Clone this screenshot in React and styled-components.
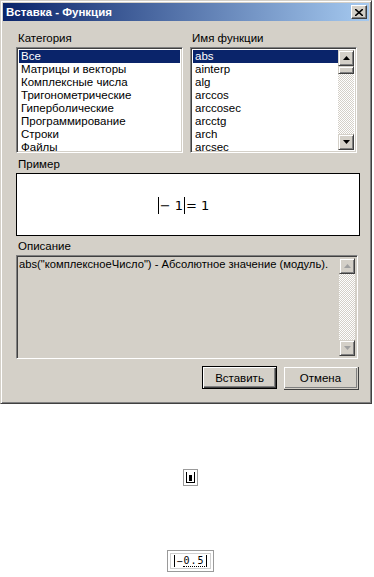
import React from 'react';
import styled, { createGlobalStyle } from 'styled-components';

const GlobalStyle = createGlobalStyle`
  html, body {
    margin: 0;
    padding: 0;
    background: #ffffff;
  }
  body {
    font-family: "Liberation Sans", Arial, sans-serif;
    font-size: 11px;
    color: #000;
  }
`;

const Page = styled.div`
  width: 374px;
  height: 577px;
  background: #fff;
  overflow: hidden;
`;

const Dialog = styled.div`
  width: 372px;
  height: 404px;
  box-sizing: border-box;
  background: #d4d0c8;
  border-top: 1px solid #d4d0c8;
  border-left: 1px solid #d4d0c8;
  border-right: 1px solid #404040;
  border-bottom: 1px solid #404040;
  box-shadow: inset 1px 1px 0 #ffffff, inset -1px -1px 0 #808080;
  padding: 2px;
  display: flex;
  flex-direction: column;
`;

const TitleBar = styled.div`
  height: 18px;
  display: flex;
  align-items: center;
  justify-content: space-between;
  padding: 0 2px 0 3px;
  background: linear-gradient(to right, #0a246a, #a6caf0);
  color: #fff;
  font-weight: bold;
  font-size: 11.5px;
`;

const CloseButton = styled.div`
  width: 16px;
  height: 14px;
  box-sizing: border-box;
  background: #d4d0c8;
  border-top: 1px solid #fff;
  border-left: 1px solid #fff;
  border-right: 1px solid #404040;
  border-bottom: 1px solid #404040;
  box-shadow: inset -1px -1px 0 #808080;
  display: flex;
  align-items: center;
  justify-content: center;
`;

const Body = styled.div`
  flex: 1;
  display: flex;
  flex-direction: column;
  padding: 10px 11px 0 13px;
`;

const Columns = styled.div`
  display: flex;
  gap: 7px;
`;

const Column = styled.div`
  display: flex;
  flex-direction: column;
  width: 167px;
`;

const Label = styled.div`
  height: 14px;
  line-height: 14px;
  padding-left: 2px;
  margin-top: ${({ $top }) => $top || 0}px;
  margin-bottom: 2px;
  font-size: 11.5px;
`;

const Sunken = styled.div`
  box-sizing: border-box;
  height: ${({ $h }) => $h}px;
  background: ${({ $bg }) => $bg || '#fff'};
  border-top: 1px solid #808080;
  border-left: 1px solid #808080;
  border-right: 1px solid #fff;
  border-bottom: 1px solid #fff;
  box-shadow: inset 1px 1px 0 #404040, inset -1px -1px 0 #d4d0c8;
  padding: 2px;
  display: flex;
  overflow: hidden;
`;

const ListItems = styled.div`
  flex: 1;
  display: flex;
  flex-direction: column;
  min-width: 0;
`;

const Item = styled.div`
  height: 13px;
  line-height: 13px;
  padding-left: 2px;
  font-size: 11.5px;
  white-space: nowrap;
  background: ${({ $sel }) => ($sel ? '#0a246a' : 'transparent')};
  color: ${({ $sel }) => ($sel ? '#fff' : '#000')};
`;

const ScrollBar = styled.div`
  width: 16px;
  display: flex;
  flex-direction: column;
  background-color: #e8e6e2;
  background-image: repeating-conic-gradient(#ffffff 0% 25%, #d4d0c8 0% 50%);
  background-size: 2px 2px;
`;

const ScrollBtn = styled.div`
  width: 16px;
  height: 16px;
  box-sizing: border-box;
  background: #d4d0c8;
  border-top: 1px solid #d4d0c8;
  border-left: 1px solid #d4d0c8;
  border-right: 1px solid #404040;
  border-bottom: 1px solid #404040;
  box-shadow: inset 1px 1px 0 #fff, inset -1px -1px 0 #808080;
  display: flex;
  align-items: center;
  justify-content: center;
`;

const Thumb = styled(ScrollBtn)`
  height: 8px;
`;

const Track = styled.div`
  flex: 1;
`;

const ExampleBox = styled.div`
  height: 63px;
  box-sizing: border-box;
  margin-right: -2px;
  background: #fff;
  border: 1px solid #000;
  display: flex;
  align-items: center;
  justify-content: center;
`;

const Formula = styled.div`
  display: flex;
  align-items: center;
  font-family: "DejaVu Sans", sans-serif;
  font-size: 13px;
  margin-right: 10px;
  margin-top: 2px;
`;

const AbsBar = styled.span`
  display: inline-block;
  width: 1px;
  height: ${({ $h }) => $h || 17}px;
  background: #000;
  margin: 0 ${({ $m }) => $m || 1}px;
`;

const DescText = styled.div`
  flex: 1;
  font-size: 11.2px;
  line-height: 13px;
  white-space: nowrap;
`;

const Buttons = styled.div`
  display: flex;
  justify-content: flex-end;
  gap: 6px;
  margin-top: 7px;
`;

const Button = styled.div`
  width: 75px;
  height: 23px;
  box-sizing: border-box;
  background: #d4d0c8;
  border: 1px solid ${({ $def }) => ($def ? '#000' : '#d4d0c8')};
  box-shadow: ${({ $def }) =>
    $def
      ? 'inset 1px 1px 0 #fff, inset -1px -1px 0 #404040, inset -2px -2px 0 #808080'
      : 'inset 1px 1px 0 #fff, inset -1px -1px 0 #808080, 1px 1px 0 #404040'};
  display: flex;
  align-items: center;
  justify-content: center;
  font-size: 11.5px;
`;

const Below = styled.div`
  display: flex;
  flex-direction: column;
  align-items: center;
  padding-left: 7px;
`;

const IconBox = styled.div`
  margin-top: ${({ $top }) => $top}px;
  box-sizing: border-box;
  border: 1px solid #9a9a9a;
  padding: 2px;
  display: flex;
  align-items: center;
`;

const Inner = styled.div`
  border: 1px solid #cfcfcf;
  display: flex;
  align-items: center;
  padding: 1px 2px;
`;

const Bracket = styled.div`
  width: 9px;
  height: 11px;
  box-sizing: border-box;
  border-left: 1px solid #000;
  border-right: 1px solid #000;
  border-bottom: 1px solid #000;
  display: flex;
  align-items: flex-end;
  justify-content: center;
  padding-bottom: 1px;
`;

const Fill = styled.div`
  width: 3px;
  height: 6px;
  background: #000;
`;

const SmallFormula = styled.div`
  display: flex;
  align-items: center;
  font-family: "DejaVu Sans Mono", monospace;
  font-size: 10px;
  letter-spacing: 1px;
`;

const Under = styled.span`
  border-bottom: 1px dotted #000;
`;

const Arrow = ({ dir, color = '#000' }) => (
  <svg width="7" height="4" viewBox="0 0 7 4">
    {dir === 'up' ? (
      <path d="M3.5 0 L7 4 L0 4 Z" fill={color} />
    ) : (
      <path d="M0 0 L7 0 L3.5 4 Z" fill={color} />
    )}
  </svg>
);

const categories = [
  'Все',
  'Матрицы и векторы',
  'Комплексные числа',
  'Тригонометрические',
  'Гиперболические',
  'Программирование',
  'Строки',
  'Файлы',
];

const functions = ['abs', 'ainterp', 'alg', 'arccos', 'arccosec', 'arcctg', 'arch', 'arcsec'];

const App = () => (
  <Page>
    <GlobalStyle />
    <Dialog>
      <TitleBar>
        <span>Вставка - Функция</span>
        <CloseButton>
          <svg width="8" height="7" viewBox="0 0 8 7">
            <path d="M0 0 L8 7 M8 0 L0 7" stroke="#000" strokeWidth="1.6" />
          </svg>
        </CloseButton>
      </TitleBar>
      <Body>
        <Columns>
          <Column>
            <Label>Категория</Label>
            <Sunken $h={106}>
              <ListItems>
                {categories.map((c, i) => (
                  <Item key={c} $sel={i === 0}>{c}</Item>
                ))}
              </ListItems>
            </Sunken>
          </Column>
          <Column>
            <Label>Имя функции</Label>
            <Sunken $h={106}>
              <ListItems>
                {functions.map((f, i) => (
                  <Item key={f} $sel={i === 0}>{f}</Item>
                ))}
              </ListItems>
              <ScrollBar>
                <ScrollBtn><Arrow dir="up" /></ScrollBtn>
                <Thumb />
                <Track />
                <ScrollBtn><Arrow dir="down" /></ScrollBtn>
              </ScrollBar>
            </Sunken>
          </Column>
        </Columns>

        <Label $top={4}>Пример</Label>
        <ExampleBox>
          <Formula>
            <AbsBar $m={1} />
            <span>− 1</span>
            <AbsBar $m={1} />
            <span>= 1</span>
          </Formula>
        </ExampleBox>

        <Label $top={3}>Описание</Label>
        <Sunken $h={104} $bg="#d4d0c8">
          <DescText>abs("комплексноеЧисло") - Абсолютное значение (модуль).</DescText>
          <ScrollBar>
            <ScrollBtn><Arrow dir="up" color="#a0a0a0" /></ScrollBtn>
            <Track />
            <ScrollBtn><Arrow dir="down" color="#a0a0a0" /></ScrollBtn>
          </ScrollBar>
        </Sunken>

        <Buttons>
          <Button $def>Вставить</Button>
          <Button>Отмена</Button>
        </Buttons>
      </Body>
    </Dialog>

    <Below>
      <IconBox $top={65}>
        <Bracket><Fill /></Bracket>
      </IconBox>
      <IconBox $top={64}>
        <Inner>
          <SmallFormula>
            <AbsBar $m={0} $h={12} />
            <span>−</span>
            <Under>0.5</Under>
            <AbsBar $m={0} $h={12} />
          </SmallFormula>
        </Inner>
      </IconBox>
    </Below>
  </Page>
);

export default App;
